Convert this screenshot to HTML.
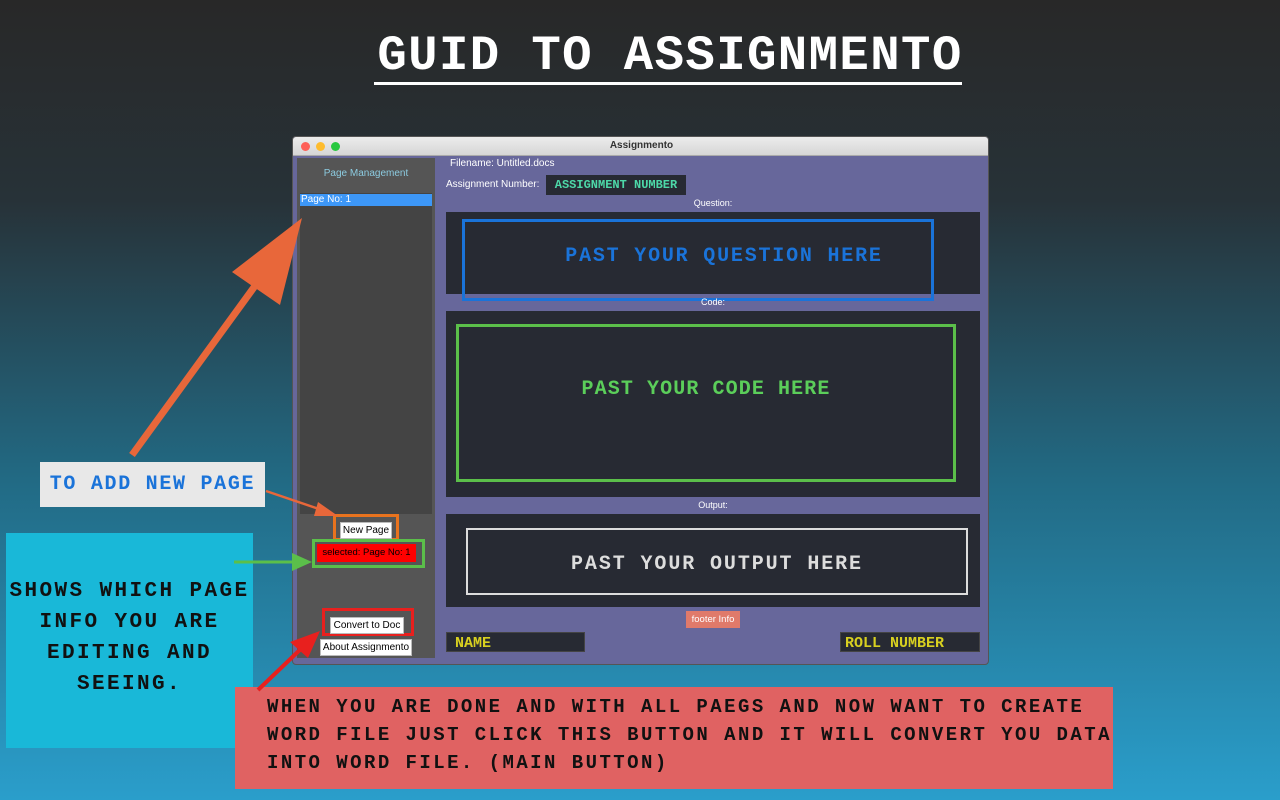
<!DOCTYPE html>
<html><head><style>
*{margin:0;padding:0;box-sizing:border-box}
body{width:1280px;height:800px;overflow:hidden;position:relative;background:linear-gradient(180deg,#282828 0%,#273238 25%,#226a84 60%,#2a9ecb 100%);font-family:"Liberation Sans",sans-serif}
.a{position:absolute}
.mono{font-family:"Liberation Mono",monospace;font-weight:bold}
.btn{position:absolute;background:#fff;color:#000;font-size:10px;text-align:center;line-height:15px;border:1px solid #bbb}
</style></head><body>
<div class="a mono" style="left:360px;top:28px;width:620px;text-align:center;color:#fff;font-size:49px;line-height:56px;letter-spacing:1.4px">GUID TO ASSIGNMENTO</div>
<div class="a" style="left:374px;top:82px;width:588px;height:3px;background:#fff"></div>

<div class="a" style="left:292px;top:136px;width:697px;height:529px;background:#67679b;border:1px solid #555;border-radius:4px;overflow:hidden">
 <div class="a" style="left:0;top:0;width:697px;height:19px;background:linear-gradient(#ececec,#d6d6d6);border-bottom:1px solid #aaa;text-align:center;font-size:10px;font-weight:bold;line-height:18px;color:#333">Assignmento</div>
 <div class="a" style="left:8px;top:5px;width:9px;height:9px;border-radius:50%;background:#fe5f57"></div>
 <div class="a" style="left:23px;top:5px;width:9px;height:9px;border-radius:50%;background:#febc2e"></div>
 <div class="a" style="left:38px;top:5px;width:9px;height:9px;border-radius:50%;background:#28c840"></div>
</div>
<div class="a" style="left:297px;top:158px;width:138px;height:500px;background:#555"></div>
<div class="a" style="left:297px;top:168px;width:138px;text-align:center;font-size:10px;color:#8ccbe0">Page Management</div>
<div class="a" style="left:300px;top:193px;width:132px;height:321px;background:#444"></div>
<div class="a" style="left:300px;top:194px;width:132px;height:12px;background:#3d97f7;color:#fff;font-size:10px;line-height:12px;padding-left:1px">Page No: 1</div>
<div class="a" style="left:333px;top:514px;width:66px;height:27px;border:3px solid #e8731e"></div>
<div class="btn" style="left:340px;top:522px;width:52px">New Page</div>
<div class="a" style="left:312px;top:539px;width:113px;height:29px;border:3px solid #5bbf4a"></div>
<div class="a" style="left:317px;top:544px;width:99px;height:18px;background:#f00;color:#000;font-size:9.5px;line-height:18px;text-align:center">selected: Page No: 1</div>
<div class="a" style="left:322px;top:608px;width:92px;height:28px;border:3px solid #e8201e"></div>
<div class="btn" style="left:330px;top:617px;width:74px">Convert to Doc</div>
<div class="btn" style="left:320px;top:639px;width:92px">About Assignmento</div>

<div class="a" style="left:450px;top:158px;font-size:10px;color:#fff">Filename: Untitled.docs</div>
<div class="a" style="left:446px;top:179px;font-size:10px;color:#fff">Assignment Number:</div>
<div class="a mono" style="left:546px;top:175px;width:140px;height:20px;background:#272a33;color:#4dd8a8;font-size:12px;line-height:20px;text-align:center">ASSIGNMENT NUMBER</div>
<div class="a" style="left:446px;top:198px;width:534px;text-align:center;font-size:9px;color:#fff">Question:</div>
<div class="a" style="left:446px;top:212px;width:534px;height:82px;background:#272a33"></div>
<div class="a mono" style="left:462px;top:219px;width:472px;height:82px;border:3px solid #1a73d9;color:#1a73d9;font-size:20px;letter-spacing:1.8px;line-height:70px;text-align:center;padding-left:52px">PAST YOUR QUESTION HERE</div>
<div class="a" style="left:446px;top:297px;width:534px;text-align:center;font-size:9px;color:#fff">Code:</div>
<div class="a" style="left:446px;top:311px;width:534px;height:186px;background:#272a33"></div>
<div class="a mono" style="left:456px;top:324px;width:500px;height:158px;border:3px solid #5bbf4a;color:#5bce5a;font-size:20px;letter-spacing:1.1px;line-height:125px;text-align:center">PAST YOUR CODE HERE</div>
<div class="a" style="left:446px;top:500px;width:534px;text-align:center;font-size:9px;color:#fff">Output:</div>
<div class="a" style="left:446px;top:514px;width:534px;height:93px;background:#272a33"></div>
<div class="a mono" style="left:466px;top:528px;width:502px;height:67px;border:2px solid #ddd;color:#ddd;font-size:20px;letter-spacing:1.9px;line-height:70px;text-align:center">PAST YOUR OUTPUT HERE</div>
<div class="a" style="left:686px;top:611px;width:54px;height:17px;background:#e07a6a;color:#fff;font-size:9.5px;line-height:17px;text-align:center">footer Info</div>
<div class="a mono" style="left:446px;top:632px;width:139px;height:20px;background:#272a33;color:#d8d020;font-size:15px;line-height:22px;padding-left:8px;border:1px solid #444">NAME</div>
<div class="a mono" style="left:840px;top:632px;width:140px;height:20px;background:#272a33;color:#d8d020;font-size:15px;line-height:22px;padding-left:4px;border:1px solid #444">ROLL NUMBER</div>

<div class="a mono" style="left:40px;top:462px;width:225px;height:45px;background:#e8e8e8;color:#1a73d9;font-size:20px;letter-spacing:1.7px;line-height:45px;text-align:center">TO ADD NEW PAGE</div>
<div class="a mono" style="left:6px;top:533px;width:247px;height:215px;background:#19b8d8;color:#111;font-size:21px;letter-spacing:2.4px;line-height:31px;text-align:center;padding-top:43px">SHOWS WHICH PAGE INFO YOU ARE EDITING AND SEEING.</div>
<div class="a mono" style="left:235px;top:687px;width:878px;height:102px;background:#e06262;color:#111;font-size:19px;letter-spacing:2.45px;line-height:28px;padding:6px 0 0 32px;white-space:nowrap;overflow:hidden">WHEN YOU ARE DONE AND WITH ALL PAEGS AND NOW WANT TO CREATE<br>WORD FILE JUST CLICK THIS BUTTON AND IT WILL CONVERT YOU DATA<br>INTO WORD FILE. (MAIN BUTTON)</div>

<svg class="a" style="left:0;top:0" width="1280" height="800">
 <line x1="132" y1="455" x2="268" y2="268" stroke="#e8673a" stroke-width="7"/>
 <polygon points="302,218 232,272 280,305" fill="#e8673a"/>
 <line x1="266" y1="491" x2="322" y2="510" stroke="#e8673a" stroke-width="2.5"/>
 <polygon points="338,516 318,502 314,516" fill="#e8673a"/>
 <line x1="234" y1="562" x2="295" y2="562" stroke="#5bbf4a" stroke-width="3"/>
 <polygon points="312,562 292,553 292,571" fill="#5bbf4a"/>
 <line x1="258" y1="690" x2="305" y2="645" stroke="#e8201e" stroke-width="4"/>
 <polygon points="320,631 290,642 308,658" fill="#e8201e"/>
</svg>
</body></html>
